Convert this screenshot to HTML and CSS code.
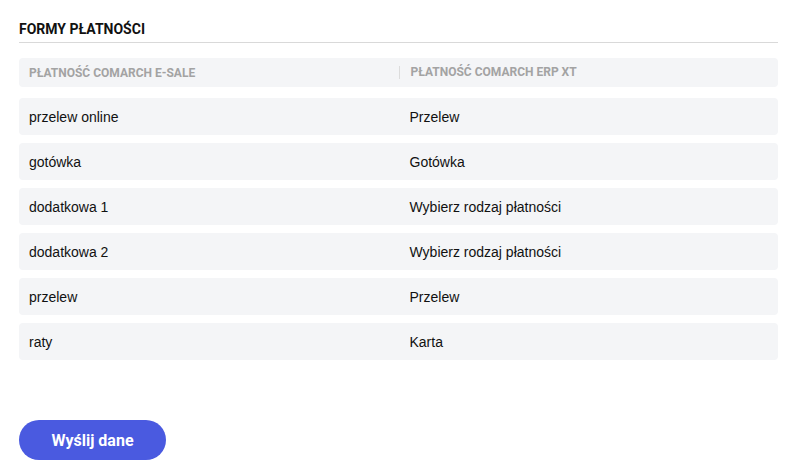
FILE: index.html
```html
<!DOCTYPE html>
<html lang="pl">
<head>
<meta charset="utf-8">
<link rel="stylesheet" href="styles.css">
</head>
<body>
<div class="page">
  <h2 class="title">FORMY PŁATNOŚCI</h2>
  <div class="table">
    <div class="row head">
      <div class="cell">PŁATNOŚĆ COMARCH E-SALE</div>
      <div class="cell sep">PŁATNOŚĆ COMARCH ERP XT</div>
    </div>
    <div class="row"><div class="cell">przelew online</div><div class="cell">Przelew</div></div>
    <div class="row"><div class="cell">gotówka</div><div class="cell">Gotówka</div></div>
    <div class="row"><div class="cell">dodatkowa 1</div><div class="cell">Wybierz rodzaj płatności</div></div>
    <div class="row"><div class="cell">dodatkowa 2</div><div class="cell">Wybierz rodzaj płatności</div></div>
    <div class="row"><div class="cell">przelew</div><div class="cell">Przelew</div></div>
    <div class="row"><div class="cell">raty</div><div class="cell">Karta</div></div>
  </div>
  <button class="btn">Wyślij dane</button>
</div>
</body>
</html>
```
FILE: styles.css
```css
* { box-sizing: border-box; }
body { margin: 0; background: #fff; font-family: "Liberation Sans", Arial, sans-serif; }
.page { padding: 21px 18px 0 19px; }
.title {
  margin: 0;
  font-family: Roboto, sans-serif;
  font-weight: 700;
  font-size: 14px;
  line-height: 17px;
  color: #111;
  padding-bottom: 4px;
  border-bottom: 1px solid #d9d9d9;
}
.table { display: flex; flex-direction: column; gap: 8px; margin-top: 15px; }
.row {
  display: grid;
  grid-template-columns: 1fr 1fr;
  background: #f4f5f7;
  border-radius: 4px;
  height: 37px;
  align-items: center;
  font-size: 14px;
  color: #111;
}
.row.head { height: 29px; margin-bottom: 3px; font-family: Roboto, sans-serif; font-weight: 700; font-size: 12px; color: #a3a3a3; }
.cell { padding-left: 10px; }
.row > .cell:nth-child(2) { padding-left: 11px; }
.cell.sep { border-left: 1px solid #dcdcdc; line-height: 13px; }
.btn {
  margin-top: 60px;
  width: 147px;
  height: 40px;
  border: none;
  border-radius: 20px;
  background: #4a5ae0;
  color: #fff;
  font-family: Roboto, sans-serif;
  font-weight: 700;
  font-size: 16px;
}
```
